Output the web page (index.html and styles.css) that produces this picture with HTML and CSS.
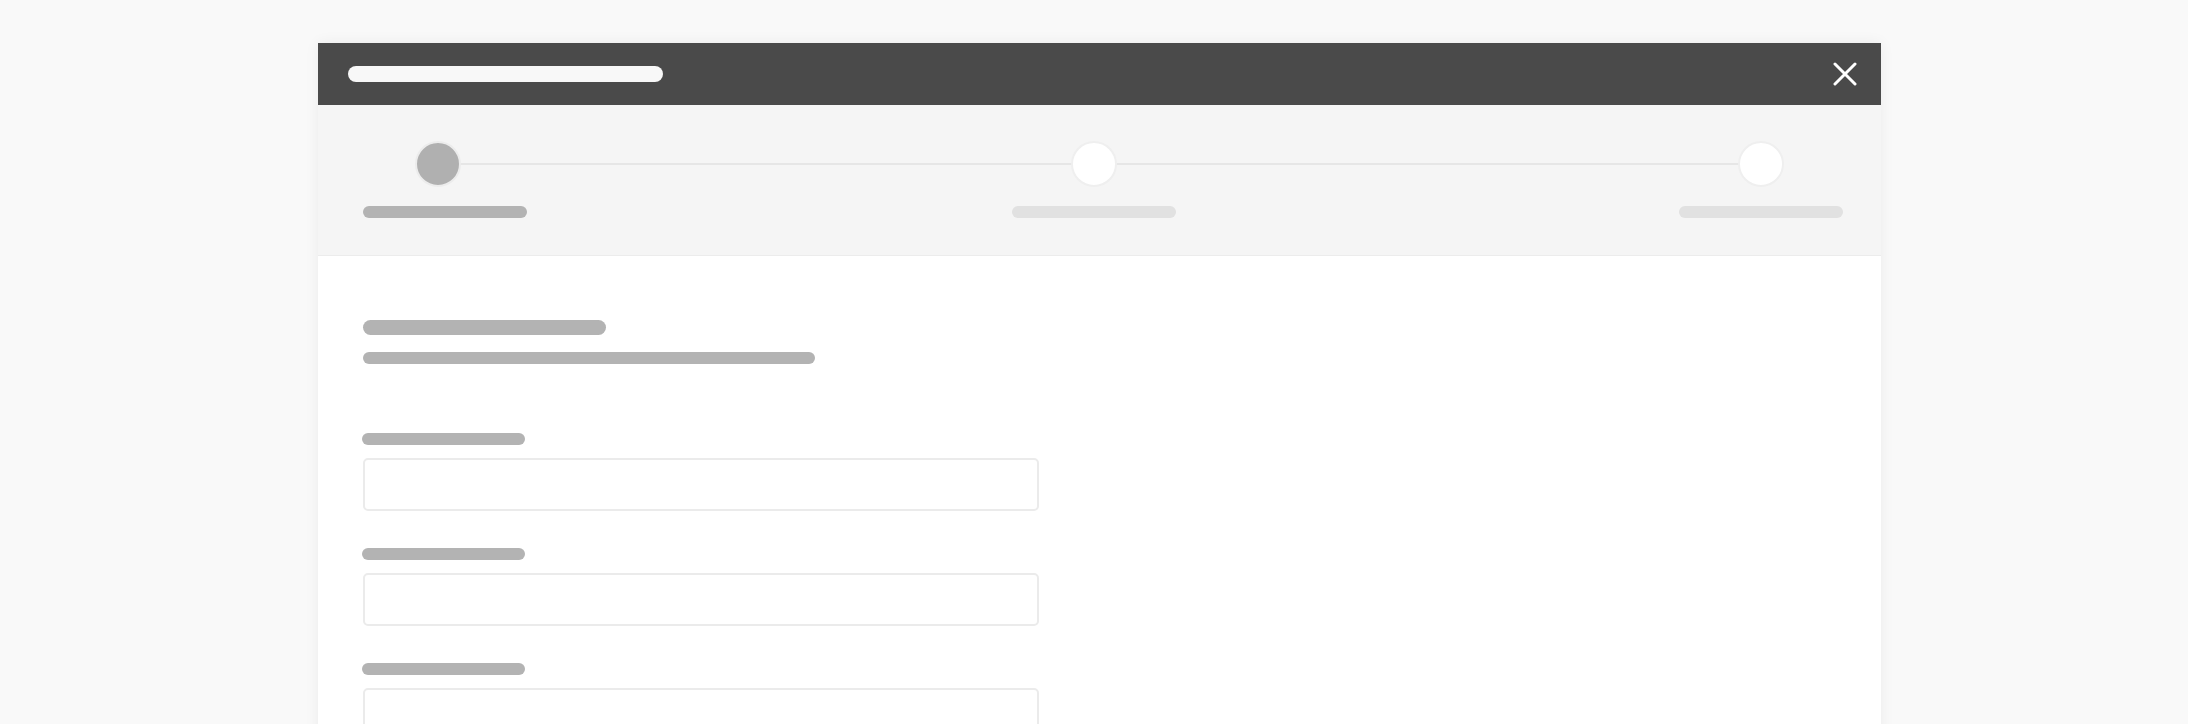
FILE: index.html
```html
<!DOCTYPE html>
<html lang="en">
<head>
  <meta charset="UTF-8" />
  <meta name="viewport" content="width=device-width, initial-scale=1.0"/>
  <title>Wizard Skeleton</title>
  <link rel="stylesheet" href="styles.css">
</head>
<body>

  <div class="page">
    <div class="modal">

      <!-- Header -->
      <div class="modal-header">
        <div class="bar title-bar"></div>
        <button class="close-btn" aria-label="Close">
          <svg width="24" height="24" viewBox="0 0 24 24">
            <path d="M2 2 L22 22 M22 2 L2 22" stroke="#ffffff" stroke-width="3" stroke-linecap="round" fill="none"/>
          </svg>
        </button>
      </div>

      <!-- Steps -->
      <div class="stepper">
        <div class="step done">
          <div class="dot"></div>
          <div class="bar step-label"></div>
        </div>
        <div class="step middle">
          <div class="dot"></div>
          <div class="bar step-label"></div>
        </div>
        <div class="step">
          <div class="dot"></div>
          <div class="bar step-label"></div>
        </div>
      </div>

      <!-- Form -->
      <div class="modal-body">
        <div class="bar heading"></div>
        <div class="bar subheading"></div>

        <div class="form-group">
          <div class="bar field-label"></div>
          <input type="text" class="field-input">
        </div>
        <div class="form-group">
          <div class="bar field-label"></div>
          <input type="text" class="field-input">
        </div>
        <div class="form-group">
          <div class="bar field-label"></div>
          <input type="text" class="field-input">
        </div>
      </div>

    </div>
  </div>

</body>
</html>
```

FILE: styles.css
```css
html, body { margin: 0; height: 100%; overflow: hidden; }
body { background: #f9f9f9; font-family: "Liberation Sans", Arial, sans-serif; }
.page { display: flex; justify-content: center; padding: 43px 0 0 10px; }
.modal { width: 1563px; background: #fff; box-shadow: 0 0 14px rgba(0, 0, 0, 0.06); min-height: 900px; }

.bar { border-radius: 8px; background: #b3b3b3; }

.modal-header { height: 62px; background: #4a4a4a; display: flex; align-items: center; justify-content: space-between; padding: 0 24px 0 30px; }
.title-bar { width: 315px; height: 16px; background: #f8f8f8; }
.close-btn { background: none; border: 0; padding: 0; width: 24px; height: 24px; display: block; cursor: pointer; }
.close-btn svg { display: block; }

.stepper { position: relative; height: 151px; background: #f5f5f5; border-bottom: 1px solid #ececec; display: flex; justify-content: space-between; padding: 36px 38px 0 45px; box-sizing: border-box; }
.stepper::before { content: ""; position: absolute; left: 120px; right: 120px; top: 58px; height: 2px; background: #e6e6e6; }
.step { position: relative; width: 164px; display: flex; flex-direction: column; align-items: center; }
.step.middle { margin-right: 18px; }
.dot { width: 46px; height: 46px; border-radius: 50%; background: #fff; border: 2px solid #efefef; box-sizing: border-box; }
.step.done .dot { background: #b0b0b0; border-color: #ececec; margin-right: 14px; }
.step-label { width: 164px; height: 12px; margin-top: 19px; background: #e1e1e1; border-radius: 6px; }
.step.done .step-label { background: #b3b3b3; }

.modal-body { padding: 64px 0 0 45px; }
.heading { width: 243px; height: 15px; }
.subheading { width: 452px; height: 12px; margin-top: 17px; border-radius: 6px; }

.form-group { margin-top: 37px; }
.modal-body .subheading + .form-group { margin-top: 69px; }
.field-label { width: 163px; height: 12px; border-radius: 6px; margin-left: -1px; }
.field-input { display: block; width: 676px; height: 53px; margin-top: 13px; box-sizing: border-box; border: 2px solid #ebebeb; border-radius: 5px; background: #fff; padding: 8px; }
```
